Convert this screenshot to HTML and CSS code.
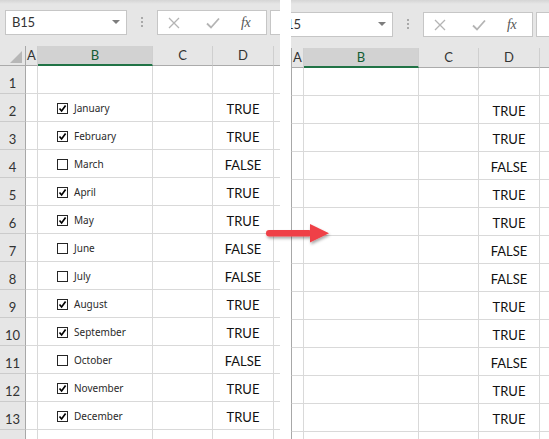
FILE: index.html
```html
<!DOCTYPE html>
<html>
<head>
<meta charset="utf-8">
<link rel="stylesheet" href="styles.css">
</head>
<body>
<div class="stage">
  <section class="pane pane-left">
    <div class="sheet">
      <div class="toolbar">
        <div class="namebox"><span class="nb-text">B15</span><span class="nb-caret"></span></div>
        <div class="grip"><i></i><i></i><i></i></div>
        <div class="fxgroup">
          <svg class="ic-x" width="12" height="12" viewBox="0 0 12 12"><path d="M1 1L11 11M11 1L1 11"/></svg>
          <svg class="ic-ok" width="14" height="12" viewBox="0 0 14 12"><path d="M1 6.5L5 10.5L13 1.5"/></svg>
          <span class="fx">fx</span>
        </div>
        <div class="formula"></div>
      </div>
      <div class="grid">
        <div class="h corner"><span class="tri"></span></div>
        <div class="h">A</div>
        <div class="h sel">B</div>
        <div class="h">C</div>
        <div class="h">D</div>
        <div class="h"></div>

        <div class="rh">1</div><div class="c"></div><div class="c"></div><div class="c"></div><div class="c"></div><div class="c"></div>
        <div class="rh">2</div><div class="c"></div><div class="c b"><span class="cb on"><svg viewBox="0 0 9 9"><path d="M1.5 4.5L3.6 7L7.6 1.6"/></svg></span><span class="lbl">January</span></div><div class="c"></div><div class="c v">TRUE</div><div class="c"></div>
        <div class="rh">3</div><div class="c"></div><div class="c b"><span class="cb on"><svg viewBox="0 0 9 9"><path d="M1.5 4.5L3.6 7L7.6 1.6"/></svg></span><span class="lbl">February</span></div><div class="c"></div><div class="c v">TRUE</div><div class="c"></div>
        <div class="rh">4</div><div class="c"></div><div class="c b"><span class="cb"></span><span class="lbl">March</span></div><div class="c"></div><div class="c v">FALSE</div><div class="c"></div>
        <div class="rh">5</div><div class="c"></div><div class="c b"><span class="cb on"><svg viewBox="0 0 9 9"><path d="M1.5 4.5L3.6 7L7.6 1.6"/></svg></span><span class="lbl">April</span></div><div class="c"></div><div class="c v">TRUE</div><div class="c"></div>
        <div class="rh">6</div><div class="c"></div><div class="c b"><span class="cb on"><svg viewBox="0 0 9 9"><path d="M1.5 4.5L3.6 7L7.6 1.6"/></svg></span><span class="lbl">May</span></div><div class="c"></div><div class="c v">TRUE</div><div class="c"></div>
        <div class="rh">7</div><div class="c"></div><div class="c b"><span class="cb"></span><span class="lbl">June</span></div><div class="c"></div><div class="c v">FALSE</div><div class="c"></div>
        <div class="rh">8</div><div class="c"></div><div class="c b"><span class="cb"></span><span class="lbl">July</span></div><div class="c"></div><div class="c v">FALSE</div><div class="c"></div>
        <div class="rh">9</div><div class="c"></div><div class="c b"><span class="cb on"><svg viewBox="0 0 9 9"><path d="M1.5 4.5L3.6 7L7.6 1.6"/></svg></span><span class="lbl">August</span></div><div class="c"></div><div class="c v">TRUE</div><div class="c"></div>
        <div class="rh">10</div><div class="c"></div><div class="c b"><span class="cb on"><svg viewBox="0 0 9 9"><path d="M1.5 4.5L3.6 7L7.6 1.6"/></svg></span><span class="lbl">September</span></div><div class="c"></div><div class="c v">TRUE</div><div class="c"></div>
        <div class="rh">11</div><div class="c"></div><div class="c b"><span class="cb"></span><span class="lbl">October</span></div><div class="c"></div><div class="c v">FALSE</div><div class="c"></div>
        <div class="rh">12</div><div class="c"></div><div class="c b"><span class="cb on"><svg viewBox="0 0 9 9"><path d="M1.5 4.5L3.6 7L7.6 1.6"/></svg></span><span class="lbl">November</span></div><div class="c"></div><div class="c v">TRUE</div><div class="c"></div>
        <div class="rh">13</div><div class="c"></div><div class="c b"><span class="cb on"><svg viewBox="0 0 9 9"><path d="M1.5 4.5L3.6 7L7.6 1.6"/></svg></span><span class="lbl">December</span></div><div class="c"></div><div class="c v">TRUE</div><div class="c"></div>
        <div class="rh"></div><div class="c"></div><div class="c"></div><div class="c"></div><div class="c"></div><div class="c"></div>
      </div>
    </div>
  </section>

  <section class="pane pane-right">
    <div class="sheet">
      <div class="toolbar">
        <div class="namebox"><span class="nb-text">B15</span><span class="nb-caret"></span></div>
        <div class="grip"><i></i><i></i><i></i></div>
        <div class="fxgroup">
          <svg class="ic-x" width="12" height="12" viewBox="0 0 12 12"><path d="M1 1L11 11M11 1L1 11"/></svg>
          <svg class="ic-ok" width="14" height="12" viewBox="0 0 14 12"><path d="M1 6.5L5 10.5L13 1.5"/></svg>
          <span class="fx">fx</span>
        </div>
        <div class="formula"></div>
      </div>
      <div class="grid">
        <div class="h corner"></div>
        <div class="h">A</div>
        <div class="h sel">B</div>
        <div class="h">C</div>
        <div class="h">D</div>
        <div class="h"></div>

        <div class="rh"></div><div class="c"></div><div class="c"></div><div class="c"></div><div class="c"></div><div class="c"></div>
        <div class="rh"></div><div class="c"></div><div class="c"></div><div class="c"></div><div class="c v">TRUE</div><div class="c"></div>
        <div class="rh"></div><div class="c"></div><div class="c"></div><div class="c"></div><div class="c v">TRUE</div><div class="c"></div>
        <div class="rh"></div><div class="c"></div><div class="c"></div><div class="c"></div><div class="c v">FALSE</div><div class="c"></div>
        <div class="rh"></div><div class="c"></div><div class="c"></div><div class="c"></div><div class="c v">TRUE</div><div class="c"></div>
        <div class="rh"></div><div class="c"></div><div class="c"></div><div class="c"></div><div class="c v">TRUE</div><div class="c"></div>
        <div class="rh"></div><div class="c"></div><div class="c"></div><div class="c"></div><div class="c v">FALSE</div><div class="c"></div>
        <div class="rh"></div><div class="c"></div><div class="c"></div><div class="c"></div><div class="c v">FALSE</div><div class="c"></div>
        <div class="rh"></div><div class="c"></div><div class="c"></div><div class="c"></div><div class="c v">TRUE</div><div class="c"></div>
        <div class="rh"></div><div class="c"></div><div class="c"></div><div class="c"></div><div class="c v">TRUE</div><div class="c"></div>
        <div class="rh"></div><div class="c"></div><div class="c"></div><div class="c"></div><div class="c v">FALSE</div><div class="c"></div>
        <div class="rh"></div><div class="c"></div><div class="c"></div><div class="c"></div><div class="c v">TRUE</div><div class="c"></div>
        <div class="rh"></div><div class="c"></div><div class="c"></div><div class="c"></div><div class="c v">TRUE</div><div class="c"></div>
        <div class="rh"></div><div class="c"></div><div class="c"></div><div class="c"></div><div class="c"></div><div class="c"></div>
      </div>
    </div>
  </section>

  <svg class="arrow" width="74" height="32" viewBox="0 0 74 32">
    <defs>
      <filter id="sh" x="-20%" y="-40%" width="140%" height="200%">
        <feDropShadow dx="1" dy="2" stdDeviation="1.6" flood-color="#000" flood-opacity="0.35"/>
      </filter>
    </defs>
    <g filter="url(#sh)" fill="#ef4046">
      <rect x="4" y="10" width="46" height="6.5" rx="3.2"/>
      <polygon points="48,4 67,13.2 48,22.4"/>
    </g>
  </svg>
</div>
</body>
</html>
```

FILE: styles.css
```css
html, body {
  margin: 0;
  padding: 0;
  background: #ffffff;
}

.stage {
  position: relative;
  display: flex;
  gap: 11px;
  width: 549px;
  height: 439px;
  overflow: hidden;
  background: #ffffff;
}

.pane {
  overflow: hidden;
  height: 439px;
}

.pane-left {
  width: 280px;
  flex: none;
}

.pane-right {
  width: 258px;
  flex: none;
}

.pane-right .sheet {
  margin-left: -25px;
}

.sheet {
  width: 360px;
  font-family: Lato, "Liberation Sans", sans-serif;
}

/* ---------- formula bar ---------- */
.toolbar {
  height: 46px;
  box-sizing: border-box;
  padding: 10px 0 0 5px;
  display: flex;
  align-items: flex-start;
  background: linear-gradient(#d5d5d5 0, #e6e6e6 4px, #e6e6e6 100%);
}

.pane-right .toolbar {
  height: 48px;
  padding-top: 12px;
}

.namebox {
  width: 122px;
  height: 25px;
  box-sizing: border-box;
  border: 1px solid #c6c6c6;
  background: #fff;
  display: flex;
  align-items: center;
  justify-content: space-between;
  padding: 0 6px 1px 6px;
  flex: none;
}

.nb-text {
  font-size: 13px;
  color: #333;
  letter-spacing: -0.2px;
}

.nb-caret {
  width: 0;
  height: 0;
  border-left: 4px solid transparent;
  border-right: 4px solid transparent;
  border-top: 4px solid #7d7d7d;
}

.grip {
  width: 2px;
  margin: 7px 0 0 14px;
  display: flex;
  flex-direction: column;
  gap: 2px;
  flex: none;
}

.grip i {
  display: block;
  width: 2px;
  height: 2px;
  background: #a9a9a9;
}

.fxgroup {
  width: 110px;
  height: 25px;
  box-sizing: border-box;
  margin-left: 14px;
  border: 1px solid #c6c6c6;
  background: #fff;
  display: flex;
  align-items: center;
  padding-left: 10px;
  flex: none;
}

.ic-x path {
  fill: none;
  stroke: #b4b4b4;
  stroke-width: 1.3;
}

.ic-ok {
  margin-left: 26px;
}

.ic-ok path {
  fill: none;
  stroke: #b4b4b4;
  stroke-width: 1.8;
}

.fx {
  margin-left: 21px;
  font-family: "Liberation Serif", serif;
  font-style: italic;
  font-size: 14px;
  color: #555;
  letter-spacing: -0.5px;
}

.formula {
  width: 120px;
  height: 25px;
  box-sizing: border-box;
  margin-left: 3px;
  border: 1px solid #c6c6c6;
  border-right: none;
  background: #fff;
  flex: none;
}

/* ---------- grid ---------- */
.grid {
  display: grid;
  grid-template-columns: 26px 12px 115px 60px 61px 86px;
  grid-template-rows: 20px;
  grid-auto-rows: 28px;
}

.h {
  box-sizing: border-box;
  background: #e6e6e6;
  border-right: 1px solid #cfcfcf;
  border-bottom: 1px solid #ababab;
  display: flex;
  align-items: center;
  justify-content: center;
  font-size: 13px;
  color: #333;
  padding-bottom: 1px;
}

.h.sel {
  background: #d2d2d2;
  border-bottom: 2px solid #217346;
  color: #135d33;
}

.h.corner {
  border-right: 1px solid #a8a8a8;
  align-items: flex-end;
  justify-content: flex-end;
  padding: 0 3px 2px 0;
}

.tri {
  width: 0;
  height: 0;
  border-left: 12px solid transparent;
  border-bottom: 12px solid #b7b7b7;
}

.rh {
  box-sizing: border-box;
  background: #e6e6e6;
  border-right: 1px solid #a8a8a8;
  border-bottom: 1px solid #cbcbcb;
  display: flex;
  align-items: flex-end;
  justify-content: center;
  padding-bottom: 2px;
  font-size: 13px;
  color: #333;
}

.c {
  box-sizing: border-box;
  background: #fff;
  border-right: 1px solid #d9d9d9;
  border-bottom: 1px solid #d9d9d9;
}

.c.v {
  display: flex;
  align-items: flex-end;
  justify-content: center;
  padding-bottom: 4px;
  font-size: 13px;
  color: #111;
}

.c.b {
  display: flex;
  align-items: flex-start;
  padding: 9px 0 0 19px;
}

.cb {
  width: 11px;
  height: 11px;
  box-sizing: border-box;
  border: 1px solid #262626;
  background: #fff;
  display: flex;
  flex: none;
}

.cb svg {
  width: 9px;
  height: 9px;
}

.cb svg path {
  fill: none;
  stroke: #000;
  stroke-width: 1.7;
}

.lbl {
  margin-left: 6px;
  font-family: "Noto Sans", "Open Sans", sans-serif;
  font-size: 10px;
  line-height: 11px;
  color: #2a2a2a;
}

/* ---------- overlay arrow ---------- */
.arrow {
  position: absolute;
  left: 262px;
  top: 220px;
}
```
